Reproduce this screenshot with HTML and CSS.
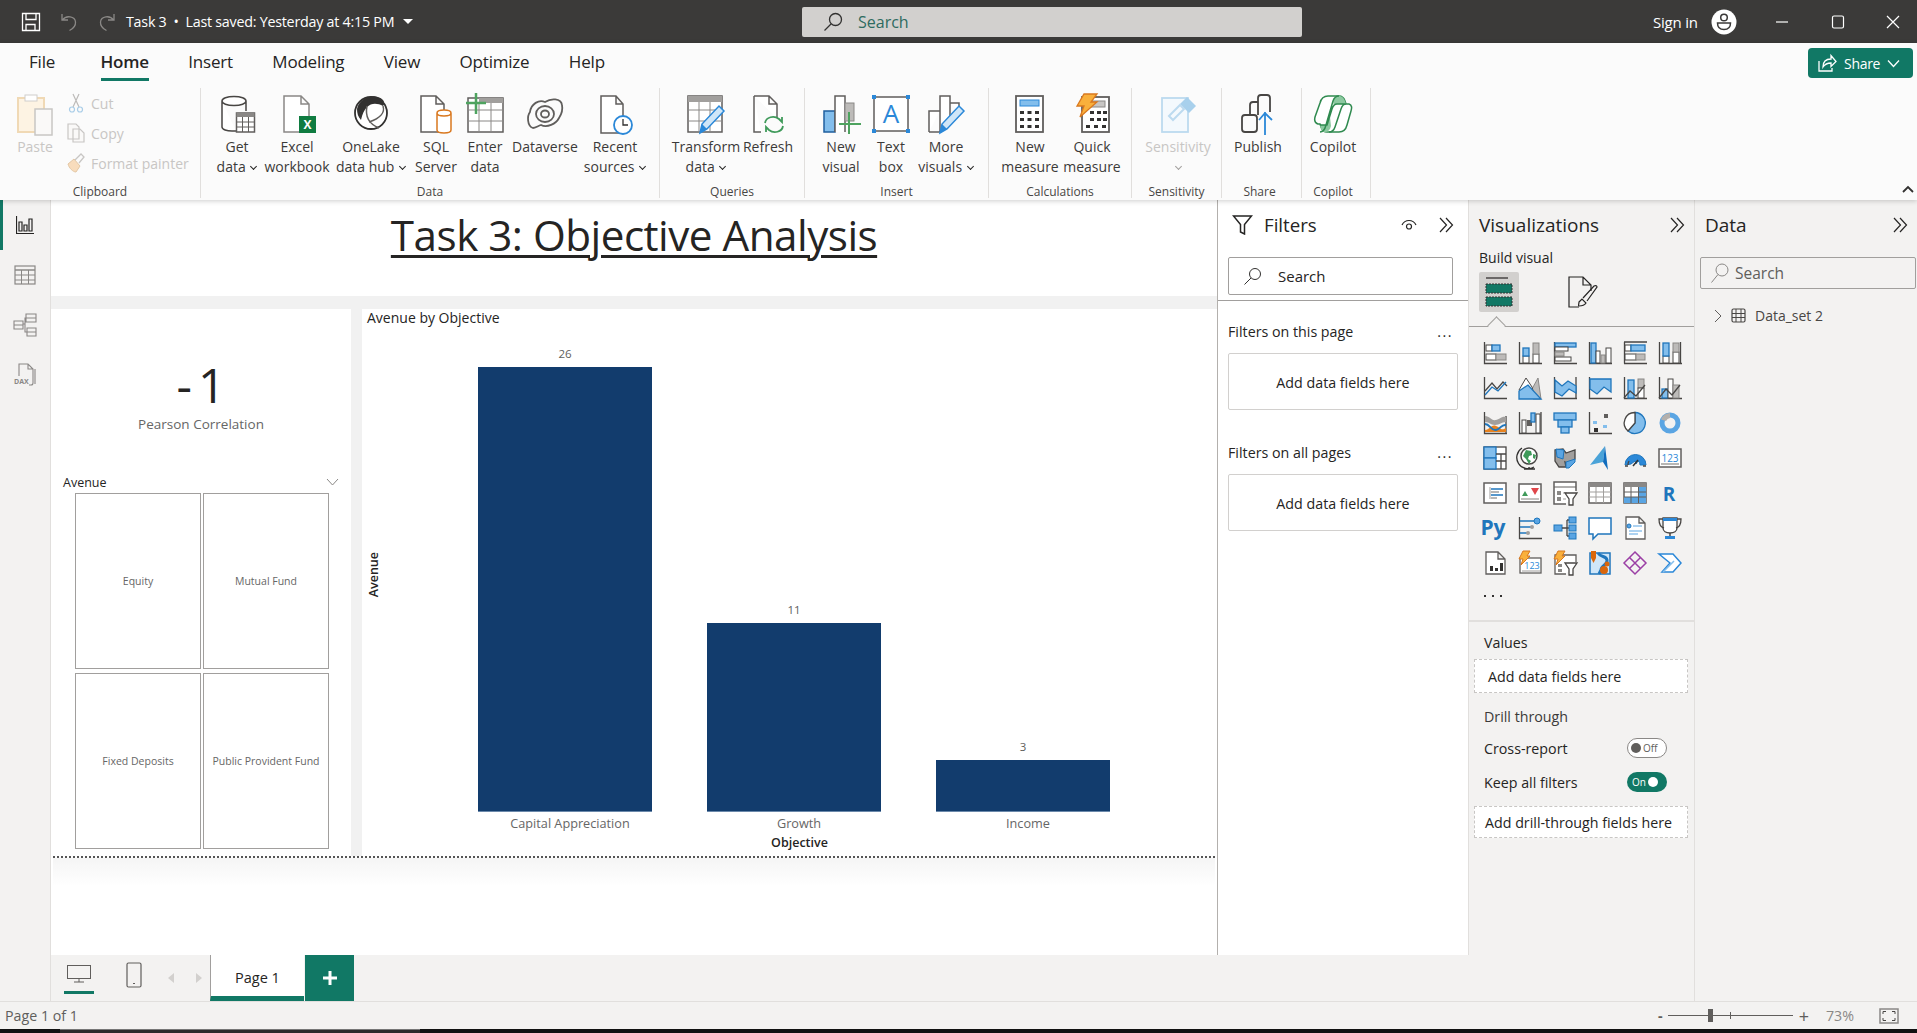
FILE: index.html
```
<!DOCTYPE html>
<html>
<head>
	<meta charset="utf-8">
	<title>Task 3</title>
	<link rel="stylesheet" href="styles.css">
</head>
<body>
<div class="app">

	<!-- title bar -->
	<header class="titlebar">
		<div class="tb-left">
			<svg class="tb-save" width="20" height="20" viewBox="0 0 20 20"><path d="M1.500 1.500h17v17h-17zM5 1.500v6h10v-6M5 18.500v-6h9v6" fill="none" stroke="#fff" stroke-width="1.300"/></svg>
			<svg class="tb-undo" width="18" height="20" viewBox="0 0 18 20"><path d="M2 2v6h6M2.500 8C6 3 15 4 15.500 10c.3 4-3 7-6 8.500" fill="none" stroke="#8a8886" stroke-width="1.300"/></svg>
			<svg class="tb-redo" width="18" height="20" viewBox="0 0 18 20"><path d="M16 2v6h-6M15.500 8C12 3 3 4 2.500 10c-.3 4 3 7 6 8.500" fill="none" stroke="#8a8886" stroke-width="1.300"/></svg>
			<span class="tb-file">Task 3 &nbsp;•&nbsp; Last saved: Yesterday at 4:15 PM</span>
			<span class="tb-caret"></span>
		</div>
		<div class="tb-search">
			<svg width="20" height="20" viewBox="0 0 20 20"><circle cx="12.500" cy="7.500" r="6" fill="none" stroke="#323130" stroke-width="1.300"/><path d="M8 12l-6.500 6.500" stroke="#323130" stroke-width="1.300"/></svg>
			<span>Search</span>
		</div>
		<div class="tb-right">
			<span class="tb-signin">Sign in</span>
			<svg class="tb-avatar" width="26" height="26" viewBox="0 0 26 26"><circle cx="13" cy="13" r="12.500" fill="#fff"/><circle cx="13" cy="8.500" r="3.300" fill="none" stroke="#3b3a39" stroke-width="1.500"/><path d="M6.500 14h13c0 4-2.500 6.500-6.500 6.500s-6.500-2.500-6.500-6.500z" fill="none" stroke="#3b3a39" stroke-width="1.500"/></svg>
			<svg class="tb-min" width="14" height="14" viewBox="0 0 14 14"><path d="M1 7h12" stroke="#fff" stroke-width="1.200"/></svg>
			<svg class="tb-max" width="14" height="14" viewBox="0 0 14 14"><rect x="1.500" y="1" width="11" height="12" rx="1.500" fill="none" stroke="#fff" stroke-width="1.200"/></svg>
			<svg class="tb-close" width="14" height="14" viewBox="0 0 14 14"><path d="M1 1l12 12M13 1L1 13" stroke="#fff" stroke-width="1.200"/></svg>
		</div>
	</header>

	<!-- ribbon -->
	<section class="ribbon">
		<nav class="tabs">
			<span class="tab tab-file">File</span>
			<span class="tab tab-on">Home</span>
			<span class="tab">Insert</span>
			<span class="tab">Modeling</span>
			<span class="tab">View</span>
			<span class="tab">Optimize</span>
			<span class="tab">Help</span>
			<button class="share">
				<svg width="20" height="20" viewBox="0 0 20 20"><path d="M2 8v10h13v-3M6 14c0-5 3-8 8-8V2.500l5 6-5 5V10c-3 0-6 1-8 4z" fill="none" stroke="#fff" stroke-width="1.300"/></svg>
				Share
				<svg width="13" height="9" viewBox="0 0 13 9"><path d="M1 1.500l5.500 6 5.500-6" fill="none" stroke="#fff" stroke-width="1.300"/></svg>
			</button>
		</nav>
		<div class="groups">

			<div class="group g-clip">
				<div class="g-body clip-body">
					<div class="rbtn off paste">
						<svg class="ricon" width="40" height="44" viewBox="0 0 40 44"><rect x="3" y="6" width="26" height="34" fill="#fdf3e3" stroke="#f0d9b5" stroke-width="2"/><rect x="10" y="3" width="12" height="6" fill="#fff" stroke="#d0cecc"/><rect x="20" y="17" width="17" height="26" fill="#faf9f8" stroke="#c8c6c4" stroke-width="1.500"/></svg>
						<span>Paste</span>
					</div>
					<div class="clip-small">
						<div class="sbtn off"><svg width="18" height="20" viewBox="0 0 18 20"><path d="M6 1l6 13M12 1L6 14" stroke="#bdbbb9" stroke-width="1.200"/><circle cx="5" cy="16.500" r="2.500" fill="none" stroke="#a9cde8" stroke-width="1.200"/><circle cx="13" cy="16.500" r="2.500" fill="none" stroke="#a9cde8" stroke-width="1.200"/></svg><span>Cut</span></div>
						<div class="sbtn off"><svg width="18" height="20" viewBox="0 0 18 20"><path d="M1 1h8l3 3v12H1z M6 6h7l4 4v9H6z" fill="#faf9f8" stroke="#c8c6c4" stroke-width="1.200"/></svg><span>Copy</span></div>
						<div class="sbtn off"><svg width="18" height="20" viewBox="0 0 18 20"><path d="M1 11l6-5 6 7-4 6c-3 0-7-4-8-8z" fill="#f8dcbc" stroke="#e3c7a4"/><path d="M8 7l6-6 3 3-5 6" fill="none" stroke="#c8c6c4" stroke-width="1.300"/></svg><span>Format painter</span></div>
					</div>
				</div>
				<div class="g-label">Clipboard</div>
			</div>

			<div class="group g-data">
				<div class="g-body data-body">
					<div class="rbtn">
						<svg class="ricon" width="40" height="44" viewBox="0 0 40 44"><path d="M5 9v26c0 2.500 5 4 10 4h4M29 9v10M5 9c0-2.500 5-4.500 12-4.500S29 6.500 29 9s-5 4.500-12 4.500S5 11.500 5 9z" fill="#fff" stroke="#484644" stroke-width="1.500"/><rect x="19.500" y="21" width="18" height="19" fill="#fff" stroke="#605e5c" stroke-width="1.500"/><rect x="19.500" y="21" width="18" height="4" fill="#8a8886"/><path d="M19.500 30h18M19.500 35h18M25.500 25v15M31.500 25v15" stroke="#605e5c"/></svg>
						<span>Get</span><span>data <i class="chev"></i></span>
					</div>
					<div class="rbtn">
						<svg class="ricon" width="40" height="44" viewBox="0 0 40 44"><path d="M7 4h17l8 8v28H7z M24 4v8h8" fill="#fff" stroke="#8a8886" stroke-width="1.500"/><rect x="22" y="24" width="17" height="17" fill="#107c41"/><text x="30.500" y="37" class="xl">X</text></svg>
						<span>Excel</span><span>workbook</span>
					</div>
					<div class="rbtn">
						<svg class="ricon" width="40" height="44" viewBox="0 0 40 44"><circle cx="20" cy="21" r="16" fill="#fff" stroke="#323130" stroke-width="1.800"/><path d="M6 17C8 6 24 0 32 8c2 3 1 5 0 6C24 10 14 10 10 28 7 25 6 21 6 17z" fill="#323130"/><path d="M16 14c-2 10 2 18 12 22M32 14c2 6-2 12-14 16" fill="none" stroke="#605e5c" stroke-width="1.500"/></svg>
						<span>OneLake</span><span>data hub <i class="chev"></i></span>
					</div>
					<div class="rbtn">
						<svg class="ricon" width="40" height="44" viewBox="0 0 40 44"><path d="M5 4h15l8 8v28H5z M20 4v8h8" fill="#fff" stroke="#605e5c" stroke-width="1.500"/><path d="M21 21v17c0 2 3 3 7 3s7-1 7-3V21c0-2-3-3-7-3s-7 1-7 3zc0 2 3 3 7 3s7-1 7-3" fill="#fff" stroke="#d9781f" stroke-width="1.500"/></svg>
						<span>SQL</span><span>Server</span>
					</div>
					<div class="rbtn">
						<svg class="ricon" width="40" height="44" viewBox="0 0 40 44"><rect x="3" y="6" width="35" height="34" fill="#fff" stroke="#605e5c" stroke-width="1.500"/><rect x="14" y="6" width="24" height="5" fill="#a19f9d"/><path d="M3 18h35M3 29h35M14 11v29M26 11v29" stroke="#8a8886"/><path d="M11 1v21M1 11h20" stroke="#4ea35f" stroke-width="2.500"/></svg>
						<span>Enter</span><span>data</span>
					</div>
					<div class="rbtn">
						<svg class="ricon" width="40" height="44" viewBox="0 0 40 44"><path d="M8 36C2 34 2 24 5 20 6 12 14 7 20 10c6-4 16-4 17 3 1 5-1 10-3 13-3 6-12 10-18 7-3 1-6 3-8 3z" fill="none" stroke="#605e5c" stroke-width="1.800"/><ellipse cx="20" cy="22" rx="9" ry="8" fill="none" stroke="#605e5c" stroke-width="1.800"/><ellipse cx="20" cy="22" rx="4" ry="3.500" fill="none" stroke="#605e5c" stroke-width="1.800"/></svg>
						<span>Dataverse</span>
					</div>
					<div class="rbtn">
						<svg class="ricon" width="40" height="44" viewBox="0 0 40 44"><path d="M6 4h15l7 8v29H6z M21 4v8h7" fill="#fff" stroke="#605e5c" stroke-width="1.500"/><circle cx="28" cy="33" r="9" fill="#fff" stroke="#2b88d8" stroke-width="1.800"/><path d="M28 27v6h5" fill="none" stroke="#323130" stroke-width="1.300"/></svg>
						<span>Recent</span><span>sources <i class="chev"></i></span>
					</div>
				</div>
				<div class="g-label">Data</div>
			</div>

			<div class="group g-queries">
				<div class="g-body queries-body">
					<div class="rbtn">
						<svg class="ricon" width="40" height="44" viewBox="0 0 40 44"><rect x="2" y="4" width="34" height="36" fill="#fff" stroke="#605e5c" stroke-width="1.500"/><rect x="2" y="4" width="34" height="6" fill="#a19f9d"/><path d="M2 18h34M2 29h34M13 10v30M24 10v30" stroke="#8a8886"/><path d="M14 41l2-9 17-18 5 5-17 18z" fill="#cfe6f8" stroke="#2b88d8" stroke-width="1.500"/><path d="M14 41l2-9 5 5z" fill="#2b88d8"/></svg>
						<span>Transform</span><span>data <i class="chev"></i></span>
					</div>
					<div class="rbtn">
						<svg class="ricon" width="40" height="44" viewBox="0 0 40 44"><path d="M6 4h15l8 8v14M13 40H6V4 M21 4v8h8" fill="#fff" stroke="#605e5c" stroke-width="1.500"/><path d="M17 31c1-6 9-8 14-4l3 3v-5M35 34c-1 6-9 8-14 4l-3-3v5" fill="none" stroke="#3f9a5a" stroke-width="1.800"/></svg>
						<span>Refresh</span>
					</div>
				</div>
				<div class="g-label">Queries</div>
			</div>

			<div class="group g-insert">
				<div class="g-body insert-body">
					<div class="rbtn">
						<svg class="ricon" width="40" height="44" viewBox="0 0 40 44"><rect x="3" y="19" width="11" height="21" fill="#83beec" stroke="#1f5f9e" stroke-width="1.500"/><path d="M14 40V4h10v36" fill="#fff" stroke="#605e5c" stroke-width="1.500"/><rect x="24" y="11" width="9" height="18" fill="#bdbbb9" stroke="#8a8886"/><path d="M28 20v22M18 32h22" stroke="#4ea35f" stroke-width="2"/></svg>
						<span>New</span><span>visual</span>
					</div>
					<div class="rbtn">
						<svg class="ricon" width="40" height="44" viewBox="0 0 40 44"><rect x="3" y="5" width="34" height="34" fill="#fff" stroke="#605e5c" stroke-width="1.500"/><rect x="1" y="3" width="4" height="4" fill="#2b88d8"/><rect x="35" y="3" width="4" height="4" fill="#2b88d8"/><rect x="1" y="37" width="4" height="4" fill="#2b88d8"/><rect x="35" y="37" width="4" height="4" fill="#2b88d8"/><text x="20" y="31" class="txt-a">A</text></svg>
						<span>Text</span><span>box</span>
					</div>
					<div class="rbtn">
						<svg class="ricon" width="40" height="44" viewBox="0 0 40 44"><path d="M3 40V19h11M14 40V4h10v20M24 11h9v8M3 40h11" fill="#fff" stroke="#605e5c" stroke-width="1.500"/><path d="M14 41l2-9 17-18 5 5-17 18z" fill="#cfe6f8" stroke="#2b88d8" stroke-width="1.500"/><path d="M14 41l2-9 5 5z" fill="#2b88d8"/></svg>
						<span>More</span><span>visuals <i class="chev"></i></span>
					</div>
				</div>
				<div class="g-label">Insert</div>
			</div>

			<div class="group g-calc">
				<div class="g-body calc-body">
					<div class="rbtn">
						<svg class="ricon" width="40" height="44" viewBox="0 0 40 44"><rect x="6" y="4" width="27" height="36" fill="#fff" stroke="#605e5c" stroke-width="1.800"/><rect x="10" y="8" width="19" height="6" fill="#83beec" stroke="#2b88d8"/><path d="M10 19h4v3h-4zM17.500 19h4v3h-4zM25 19h4v3h-4zM10 26h4v3h-4zM17.500 26h4v3h-4zM25 26h4v3h-4zM10 33h4v3h-4zM17.500 33h4v3h-4zM25 33h4v3h-4z" fill="#323130"/></svg>
						<span>New</span><span>measure</span>
					</div>
					<div class="rbtn">
						<svg class="ricon" width="40" height="44" viewBox="0 0 40 44"><rect x="10" y="5" width="27" height="35" fill="#fff" stroke="#605e5c" stroke-width="1.800"/><rect x="18" y="9" width="15" height="6" fill="#c8c6c4" stroke="#8a8886"/><path d="M18 19h4v3h-4zM25 19h4v3h-4zM31 19h4v3h-4zM18 26h4v3h-4zM25 26h4v3h-4zM31 26h4v3h-4zM14 33h4v3h-4zM22 33h4v3h-4zM30 33h4v3h-4z" fill="#323130"/><path d="M12 2h13l-6 8h6L8 25l4-11H5z" fill="#f9b03c" stroke="#d9781f" stroke-width="1.300"/></svg>
						<span>Quick</span><span>measure</span>
					</div>
				</div>
				<div class="g-label">Calculations</div>
			</div>

			<div class="group g-sens">
				<div class="g-body sens-body">
					<div class="rbtn off">
						<svg class="ricon" width="40" height="44" viewBox="0 0 40 44"><rect x="4" y="6" width="26" height="34" fill="#f4f9fd" stroke="#bcdaef" stroke-width="1.800"/><path d="M22 12l7-7 9 9-7 7z" fill="#a8d0ec"/><path d="M11 24l11-11 4 4-11 11z" fill="none" stroke="#bcdaef" stroke-width="2"/></svg>
						<span>Sensitivity</span><span><i class="chev chev-off"></i></span>
					</div>
				</div>
				<div class="g-label">Sensitivity</div>
			</div>

			<div class="group g-share">
				<div class="g-body share-body">
					<div class="rbtn">
						<svg class="ricon" width="40" height="44" viewBox="0 0 40 44"><rect x="4" y="23" width="15" height="17" rx="3" fill="none" stroke="#484644" stroke-width="1.800"/><path d="M12 23V13c0-2 1-3 3-3h5M20 23V6c0-2 1-3 3-3h6c2 0 3 1 3 3v14" fill="none" stroke="#484644" stroke-width="1.800"/><path d="M27 43V20M21 28l6-7 7 7" fill="none" stroke="#2b88d8" stroke-width="1.800"/></svg>
						<span>Publish</span>
					</div>
				</div>
				<div class="g-label">Share</div>
			</div>

			<div class="group g-copilot">
				<div class="g-body copilot-body">
					<div class="rbtn">
						<svg class="ricon" width="40" height="44" viewBox="0 0 40 44"><path d="M15 4h11c3 0 5 2 6 5l1 3h3c3 1 3 4 2 7l-4 14c-1 4-4 7-8 7H14c-3 0-5-2-6-5l-1-3H5c-3-1-4-3-3-7L7 11c1-4 4-7 8-7z" fill="#fff" stroke="#2f8a4f" stroke-width="1.500"/><path d="M26 4c3 0 5 2 6 5l1 3H24c-2 0-3 1-3 3l-1-6c1-3 3-5 6-5zM7 33H14l3-8 1 9c-1 4-3 6-6 6-3 0-4-2-5-7z" fill="#8cc9a0"/><path d="M26 4c-3 0-5 2-6 5L13 33c-1 4-3 7-6 7M33 12H24c-3 0-4 2-5 5l-5 16H7M33 12c-2 0-4 2-5 5l-6 18c-1 3-3 5-6 5" fill="none" stroke="#2f8a4f" stroke-width="1.500"/></svg>
						<span>Copilot</span>
					</div>
				</div>
				<div class="g-label">Copilot</div>
			</div>

			<svg class="collapse" width="12" height="8" viewBox="0 0 12 8"><path d="M1 7l5-5 5 5" fill="none" stroke="#323130" stroke-width="1.800"/></svg>
		</div>
	</section>

	<!-- main area -->
	<main class="main">
		<aside class="rail">
			<div class="rail-btn rail-on"><svg width="18" height="18" viewBox="0 0 18 18"><path d="M.5 0v17.500H18" fill="none" stroke="#252423" stroke-width="1.200"/><path d="M3 6h3v9H3zM8 9h3v6H8zM13 3h3v12h-3z" fill="none" stroke="#252423" stroke-width="1.200"/></svg></div>
			<div class="rail-btn"><svg width="22" height="20" viewBox="0 0 22 20"><rect x="1" y="1" width="20" height="18" fill="none" stroke="#8a8886" stroke-width="1.200"/><path d="M1 5h20" stroke="#8a8886" stroke-width="1.500"/><path d="M1 10h20M1 15h20M7.500 5v14M14.500 5v14" stroke="#8a8886"/></svg></div>
			<div class="rail-btn"><svg width="24" height="24" viewBox="0 0 24 24"><path d="M1 8h9v8H1zM1 12h9M13 1h10v8H13zM13 5h10M14 15h9v8h-9zM14 19h9M10 11h2V5h1M12 11v8h2" fill="none" stroke="#8a8886" stroke-width="1.100"/></svg></div>
			<div class="rail-btn"><svg width="24" height="24" viewBox="0 0 24 24"><path d="M6 13V1h9l5 5v14c0 1-1 2-2 2h-2M15 1v5h5M22 6v15" fill="none" stroke="#8a8886" stroke-width="1.100"/><text x="1" y="21" class="dax">DAX</text></svg></div>
		</aside>

		<div class="center">
			<div class="workspace">
				<div class="canvas">
					<h1 class="report-title"><u>Task 3: Objective Analysis</u></h1>
					<div class="report-row">
						<div class="side-card">
							<div class="kpi">
								<div class="kpi-value">-1</div>
								<div class="kpi-label">Pearson Correlation</div>
							</div>
							<div class="slicer-head">
								<span>Avenue</span>
								<svg width="13" height="8" viewBox="0 0 13 8"><path d="M1 1l5.500 6L12 1" fill="none" stroke="#8a8886"/></svg>
							</div>
							<div class="slicer-tiles">
								<div class="tile">Equity</div>
								<div class="tile">Mutual Fund</div>
								<div class="tile">Fixed Deposits</div>
								<div class="tile">Public Provident Fund</div>
							</div>
						</div>
						<div class="chart">
							<div class="chart-title">Avenue by Objective</div>
							<div class="chart-body">
								<div class="y-axis"><span>Avenue</span></div>
								<div class="plot-wrap">
									<div class="plot">
										<div class="col"><div class="val">26</div><div class="bar bar-a"></div></div>
										<div class="col"><div class="val">11</div><div class="bar bar-b"></div></div>
										<div class="col"><div class="val">3</div><div class="bar bar-c"></div></div>
									</div>
									<div class="cats">
										<span>Capital Appreciation</span>
										<span>Growth</span>
										<span>Income</span>
									</div>
									<div class="x-title">Objective</div>
								</div>
							</div>
						</div>
					</div>
					<div class="page-end"></div>
				</div>

				<aside class="filters">
					<div class="f-head">
						<svg width="21" height="21" viewBox="0 0 21 21"><path d="M1.500 2h18l-7 8.500V20l-4-2v-7.500z" fill="none" stroke="#252423" stroke-width="1.500"/></svg>
						<span class="f-title">Filters</span>
						<svg class="f-eye" width="16" height="14" viewBox="0 0 16 14"><path d="M1 7c3-6 11-6 14 0" fill="none" stroke="#252423" stroke-width="1.200"/><circle cx="8" cy="8.500" r="2.500" fill="none" stroke="#252423" stroke-width="1.200"/></svg>
						<svg class="dbl" width="15" height="16" viewBox="0 0 15 16"><path d="M1 1l6.500 7L1 15M7 1l6.500 7L7 15" fill="none" stroke="#252423" stroke-width="1.200"/></svg>
					</div>
					<div class="f-search">
						<svg width="19" height="19" viewBox="0 0 19 19"><circle cx="12" cy="7" r="5.500" fill="none" stroke="#323130"/><path d="M8 11l-6.500 6.500" stroke="#323130"/></svg>
						<span>Search</span>
					</div>
					<div class="f-rule"></div>
					<div class="f-sec">
						<div class="f-sec-head"><span>Filters on this page</span><span class="dots">...</span></div>
						<div class="f-box">Add data fields here</div>
					</div>
					<div class="f-sec">
						<div class="f-sec-head"><span>Filters on all pages</span><span class="dots">...</span></div>
						<div class="f-box">Add data fields here</div>
					</div>
				</aside>
			</div>

			<div class="pagebar">
				<div class="view-btn view-on"><svg width="24" height="18" viewBox="0 0 24 18"><rect x=".5" y=".5" width="23" height="13" fill="none" stroke="#605e5c"/><path d="M12 14v3M7 17h10" stroke="#605e5c"/></svg></div>
				<div class="view-phone"><svg width="16" height="26" viewBox="0 0 16 26"><rect x="1" y="1" width="14" height="24" rx="1.500" fill="none" stroke="#605e5c" stroke-width="1.200"/><path d="M7 21.500h2" stroke="#605e5c" stroke-width="1.200"/></svg></div>
				<div class="arrows">
					<i class="arr arr-l"></i>
					<i class="arr arr-r"></i>
				</div>
				<div class="page-tab">Page 1</div>
				<div class="page-add"><svg width="14" height="14" viewBox="0 0 14 14"><path d="M7 0v14M0 7h14" stroke="#fff" stroke-width="3"/></svg></div>
			</div>
		</div>

		<aside class="viz">
			<div class="p-head"><span>Visualizations</span>
				<svg class="dbl" width="15" height="16" viewBox="0 0 15 16"><path d="M1 1l6.500 7L1 15M7 1l6.500 7L7 15" fill="none" stroke="#252423" stroke-width="1.200"/></svg>
			</div>
			<div class="build-label">Build visual</div>
			<div class="build-icons">
				<div class="build-on">
					<svg width="30" height="32" viewBox="0 0 30 32"><path d="M2 2h22" stroke="#484644" stroke-width="1.500"/><rect x="2" y="8" width="26" height="9" fill="#117865" stroke="#333" stroke-dasharray="2 1"/><rect x="2" y="21" width="26" height="9" fill="#117865" stroke="#333" stroke-dasharray="2 1"/></svg>
				</div>
				<svg class="build-fmt" width="32" height="32" viewBox="0 0 32 32"><path d="M12 31H2V1h14l8 8v6M16 1v8h8" fill="none" stroke="#252423" stroke-width="1.200"/><path d="M12 26l3-3 4 4c-2 3-6 3-7 3-1 0 0-2 0-4zM16 22L27 10c2-1 3 0 3 1L20 25" fill="none" stroke="#252423" stroke-width="1.200"/></svg>
			</div>
			<div class="tab-rule"><i></i></div>

			<div class="viz-grid">
				<!-- row 1 -->
				<svg viewBox="0 0 24 24"><path class="ax" d="M1.500 1v21.500H24"/><rect class="wh" x="3" y="4" width="6" height="6"/><rect class="bl" x="9" y="4" width="8" height="6"/><rect class="wh" x="3" y="13" width="10" height="6"/><rect class="gr" x="13" y="13" width="10" height="6"/></svg>
				<svg viewBox="0 0 24 24"><path class="ax" d="M1.500 1v21.500H24"/><rect class="wh" x="5" y="15" width="6" height="7"/><rect class="bl" x="5" y="7" width="6" height="8"/><rect class="wh" x="15" y="13" width="6" height="9"/><rect class="gr" x="15" y="2" width="6" height="11"/></svg>
				<svg viewBox="0 0 24 24"><path class="ax" d="M1.500 1v21.500H24"/><rect class="bl" x="2" y="2" width="21" height="4"/><rect class="wh" x="2" y="6" width="13" height="4"/><rect class="gr" x="2" y="11" width="9" height="4"/><rect class="wh" x="2" y="16" width="16" height="4"/></svg>
				<svg viewBox="0 0 24 24"><path class="ax" d="M1.500 1v21.500H24"/><rect class="bl" x="3" y="2" width="5" height="20"/><rect class="wh" x="8" y="10" width="4" height="12"/><rect class="gr" x="13" y="14" width="4" height="8"/><rect class="wh" x="18" y="7" width="5" height="15"/></svg>
				<svg viewBox="0 0 24 24"><path class="ax" d="M1.500 1v21.500M1 1h23M1 22.500h23"/><rect class="wh" x="2" y="4" width="6" height="6"/><rect class="bl" x="8" y="4" width="14" height="6"/><rect class="wh" x="2" y="13" width="11" height="6"/><rect class="gr" x="13" y="13" width="9" height="6"/></svg>
				<svg viewBox="0 0 24 24"><path class="ax" d="M1.500 1v21.500H24M22.500 1v21"/><rect class="wh" x="5" y="15" width="6" height="7"/><rect class="bl" x="5" y="2" width="6" height="13"/><rect class="wh" x="15" y="11" width="6" height="11"/><rect class="gr" x="15" y="2" width="6" height="9"/></svg>
				<!-- row 2 -->
				<svg viewBox="0 0 24 24"><path class="ax" d="M1.500 1v21.500H24"/><path class="ax" d="M2 15l7-8 5 6 6-7 4 4"/><path class="ln" d="M2 19l7-8 6 4 8-9"/></svg>
				<svg viewBox="0 0 24 24"><path class="gr" d="M14 13l6-11 3 21h-8z"/><path class="wh" d="M1 14L8 2l6 9 3 11z"/><path class="bl" d="M1 23v-8l9-6 13 14z"/></svg>
				<svg viewBox="0 0 24 24"><path class="ax" d="M1.500 1v21.500H24M23 1v21"/><path class="bl" d="M2 4l7 6 6-5 8 5v7l-7-4-7 7-7-4z"/></svg>
				<svg viewBox="0 0 24 24"><path class="ax" d="M1.500 1v21.500H24"/><path class="bl" d="M2 3h21v13l-7-5-7 7-7-5z"/></svg>
				<svg viewBox="0 0 24 24"><path class="ax" d="M1.500 1v21.500H24"/><rect class="bl" x="5" y="4" width="6" height="18"/><rect class="gr" x="15" y="3" width="6" height="9"/><rect class="wh" x="15" y="12" width="6" height="10"/><path class="ax" d="M1 22l6-7 6 5 9-11"/></svg>
				<svg viewBox="0 0 24 24"><path class="ax" d="M1.500 1v21.500H24"/><rect class="bl" x="4" y="13" width="6" height="9"/><rect class="wh" x="10" y="3" width="5" height="19"/><rect class="gr" x="15" y="9" width="6" height="13"/><path class="ax" d="M1 22l7-9 6 6 8-10"/></svg>
				<!-- row 3 -->
				<svg viewBox="0 0 24 24"><path class="ax" d="M1.500 1v21.500H24M23 5v17"/><path d="M2 5c5 0 6 5 11 4s5-4 10-3v5c-5 0-6 3-11 3S7 11 2 11z" fill="#a19f9d"/><path d="M2 19c5 0 6-6 11-4s5 5 10 2v4H2z" fill="#e8821e"/><path d="M2 13c5 0 6 7 11 6s5-6 10-5" fill="none" stroke="#1f76bc" stroke-width="2"/></svg>
				<svg viewBox="0 0 24 24"><path class="ax" d="M1.500 1v21.500H24M23 1v21"/><rect class="wh" x="4" y="9" width="4" height="13"/><rect x="9" y="9" width="5" height="6" fill="#605e5c"/><rect class="bl" x="13" y="2" width="4" height="9"/><rect class="wh" x="18" y="3" width="4" height="19"/></svg>
				<svg viewBox="0 0 24 24"><rect class="bl" x="1" y="2" width="22" height="7"/><rect class="bl" x="5" y="9" width="14" height="7"/><rect class="bl" x="8" y="16" width="8" height="6"/></svg>
				<svg viewBox="0 0 24 24"><path class="ax" d="M1.500 1v21.500H24"/><rect x="5" y="10" width="4" height="3" fill="#83beec"/><rect x="6" y="17" width="4" height="4" fill="#323130"/><rect x="16" y="3" width="4" height="4" fill="#605e5c"/><rect x="15" y="14" width="4" height="3" fill="#83beec"/></svg>
				<svg viewBox="0 0 24 24"><path d="M12 1.500A10.500 10.500 0 1 1 5 20l7-8z" fill="#83beec" stroke="#1f76bc" stroke-width="1.300"/><path d="M12 1.500A10.500 10.500 0 0 0 5 20l7-8z" fill="#fff" stroke="#484644" stroke-width="1.300"/></svg>
				<svg viewBox="0 0 24 24"><circle cx="12" cy="12" r="8" fill="none" stroke="#5aa5e3" stroke-width="5"/><path d="M3 8.500A10 10 0 0 1 12 2v5a5 5 0 0 0-4 3z" fill="#b3b0ad"/></svg>
				<!-- row 4 -->
				<svg viewBox="0 0 24 24"><rect x="1" y="1" width="22" height="22" fill="#fff" stroke="#484644" stroke-width="1.300"/><rect x="1" y="1" width="12" height="11" fill="#83beec" stroke="#1f76bc" stroke-width="1.300"/><rect x="1" y="12" width="12" height="11" fill="#83beec" stroke="#1f76bc" stroke-width="1.300"/><path d="M13 8h10M18 8v15M13 15h10" stroke="#484644" stroke-width="1.300"/></svg>
				<svg viewBox="0 0 24 24"><circle cx="11" cy="10" r="8" fill="#fff" stroke="#484644" stroke-width="1.500"/><path d="M8 4l5 1 1 4-3 1-1 3 3 2-2 3-3-5-3-3z" fill="#3f9a5a"/><path d="M15 8l3 1-1 4-2-1z" fill="#3f9a5a"/><path d="M4 2a11 11 0 0 0 12 19M11 21v2M6 23h11" fill="none" stroke="#323130" stroke-width="1.300"/></svg>
				<svg viewBox="0 0 24 24"><path d="M2 4l8-1 3 4 9-3v9l-6 5-4-2 1 5H6L2 15z" fill="#a19f9d" stroke="#484644" stroke-width="1.300"/><path d="M3 3l8 1-1 9-6-2z" fill="#5aa5e3" stroke="#1f76bc"/><path d="M13 16l9-3v3l-6 6h-3z" fill="#5aa5e3" stroke="#1f76bc"/></svg>
				<svg viewBox="0 0 24 24"><path d="M17 0L2 19l13-3z" fill="#4aa3d8"/><path d="M17 0l-2 16 5 8z" fill="#0f6cbd"/></svg>
				<svg viewBox="0 0 24 24"><path d="M2 19A10.500 10.500 0 0 1 23 19h-6a4 4 0 0 0-2-4l-2 3-1-3-4 3z" fill="#2b88d8" stroke="#1f76bc"/><path d="M2 20h3M20 20h3M5 19a8 8 0 0 1 1-4" stroke="#484644" fill="none" stroke-width="1.300"/><path d="M10 20l5-6" stroke="#323130" stroke-width="1.500"/></svg>
				<svg viewBox="0 0 24 24"><rect x="1" y="3" width="22" height="18" fill="#fff" stroke="#605e5c" stroke-width="1.500"/><path d="M3 18h18" stroke="#a19f9d" stroke-width="1.500"/><text x="12" y="15.500" class="num">123</text></svg>
				<!-- row 5 -->
				<svg viewBox="0 0 24 24"><rect x="1" y="2" width="22" height="20" fill="#fff" stroke="#605e5c" stroke-width="1.500"/><path d="M7 6v12" stroke="#a19f9d"/><path d="M8 8h12M8 14h12" stroke="#1f76bc" stroke-width="1.500"/><path d="M8 11h8M8 17h6" stroke="#a19f9d" stroke-width="1.300"/></svg>
				<svg viewBox="0 0 24 24"><rect x="1" y="3" width="22" height="18" fill="#fff" stroke="#605e5c" stroke-width="1.500"/><path d="M4 15l3-5 3 5z" fill="#3f9a5a"/><path d="M13 7h8l-4 7z" fill="#e0464a"/><path d="M3 18h18" stroke="#a19f9d" stroke-width="1.300"/></svg>
				<svg viewBox="0 0 24 24"><path d="M13 23H1V1h22v9" fill="#fff" stroke="#605e5c" stroke-width="1.500"/><path d="M1 6h22" stroke="#605e5c"/><rect x="4" y="10" width="4" height="4" fill="#8a8886"/><rect x="4" y="16" width="4" height="4" fill="#8a8886"/><path d="M10 12h4M10 18h3" stroke="#a19f9d"/><path d="M12 12h12l-4 6v6h-4v-6z" fill="#fff" stroke="#484644" stroke-width="1.300"/></svg>
				<svg viewBox="0 0 24 24"><rect x="1" y="2" width="22" height="20" fill="#fff" stroke="#605e5c" stroke-width="1.500"/><rect x="1" y="2" width="22" height="4" fill="#8a8886"/><path d="M1 11h22M1 16h22M8 6v16M15.500 6v16" stroke="#a19f9d"/></svg>
				<svg viewBox="0 0 24 24"><rect x="1" y="2" width="22" height="20" fill="#fff" stroke="#605e5c" stroke-width="1.500"/><rect x="1" y="2" width="22" height="4" fill="#8a8886"/><path d="M16 6h7v16h-7zM1 16h15v6H1z" fill="#5aa5e3"/><path d="M1 11h22M1 16h22M8 6v16M15.500 6v16" stroke="#605e5c"/></svg>
				<svg viewBox="0 0 24 24"><text x="11" y="19.500" class="lang lang-r">R</text></svg>
				<!-- row 6 -->
				<svg viewBox="0 0 24 24"><text x="10" y="19" class="lang lang-py">Py</text></svg>
				<svg viewBox="0 0 24 24"><path class="ax" d="M1.500 1v21.500H24"/><path d="M2 5h15M2 11h11M2 17h7" stroke="#1f76bc" stroke-width="1.300"/><circle cx="19" cy="5" r="3" fill="#5aa5e3" stroke="#1f76bc"/><circle cx="14" cy="11" r="2" fill="#a19f9d"/><circle cx="10" cy="17" r="2" fill="#a19f9d"/></svg>
				<svg viewBox="0 0 24 24"><rect x="1" y="9" width="8" height="6" fill="#5aa5e3" stroke="#1f76bc"/><path d="M9 12h5M14 4v16M14 4h2M14 12h2M14 20h2" stroke="#484644" fill="none" stroke-width="1.300"/><rect x="16" y="1" width="7" height="6" fill="#5aa5e3" stroke="#1f76bc"/><rect x="16" y="9" width="7" height="6" fill="#5aa5e3" stroke="#1f76bc"/><rect x="16" y="17" width="7" height="6" fill="#5aa5e3" stroke="#1f76bc"/></svg>
				<svg viewBox="0 0 24 24"><path d="M1 2h22v16H10l-5 5v-5H1z" fill="#fff" stroke="#1f76bc" stroke-width="1.500"/></svg>
				<svg viewBox="0 0 24 24"><path d="M3 1h13l6 6v16H3z M16 1v6h6" fill="#fff" stroke="#605e5c" stroke-width="1.300"/><circle cx="6" cy="10" r="2" fill="#5aa5e3" stroke="#1f76bc"/><path d="M10 10h9M6 15h13M6 18h9" stroke="#5aa5e3"/></svg>
				<svg viewBox="0 0 24 24"><path d="M5 2h14v10c0 3-3 5-7 5s-7-2-7-5z" fill="#fff" stroke="#484644" stroke-width="1.300"/><path d="M5 3H1c0 5 1 8 5 9M19 3h4c0 5-1 8-5 9" fill="none" stroke="#484644" stroke-width="1.300"/><rect x="5" y="2" width="14" height="3" fill="#2b88d8"/><path d="M12 17v3" stroke="#484644" stroke-width="1.500"/><rect x="7" y="20" width="10" height="3" fill="#2b88d8"/></svg>
				<!-- row 7 -->
				<svg viewBox="0 0 24 24"><path d="M3 1h12l7 7v15H3z M15 1v7h7" fill="#fff" stroke="#605e5c" stroke-width="1.300"/><path d="M7 15h3v5H7zM12 17h3v3h-3zM17 12h3v8h-3z" fill="#323130"/></svg>
				<svg viewBox="0 0 24 24"><rect x="2" y="7" width="21" height="15" fill="#fff" stroke="#605e5c" stroke-width="1.300"/><text x="14" y="18" class="num num-sm">123</text><path d="M4 20h18" stroke="#a19f9d"/><path d="M5 0h7L9 5h3L3 14l2-6H1z" fill="#f9b03c" stroke="#d9781f"/></svg>
				<svg viewBox="0 0 24 24"><path d="M13 23H2V4h21v7" fill="#fff" stroke="#605e5c" stroke-width="1.300"/><rect x="5" y="13" width="4" height="3" fill="#8a8886"/><rect x="5" y="18" width="4" height="3" fill="#8a8886"/><path d="M12 12h12l-4 6v6h-4v-6z" fill="#fff" stroke="#484644" stroke-width="1.300"/><path d="M5 0h7L9 5h3L3 14l2-6H1z" fill="#f9b03c" stroke="#d9781f"/></svg>
				<svg viewBox="0 0 24 24"><rect x="2" y="2" width="20" height="21" fill="#cfe6f8" stroke="#1f76bc" stroke-width="1.500"/><path d="M10 2c3 5 8 2 9 7s-6 5-6 10l-2 4" fill="none" stroke="#1f76bc" stroke-width="3"/><path d="M3 0h5v7l-2.500 5L3 7z" fill="#d9660b"/><circle cx="19" cy="13" r="2.500" fill="#d9660b"/><circle cx="16" cy="19" r="4" fill="#d9660b"/></svg>
				<svg viewBox="0 0 24 24"><path d="M12 1l11 11-11 11L1 12z" fill="none" stroke="#9b3fa5" stroke-width="1.500"/><path d="M6.500 6.500l11 11M17.500 6.500l-11 11" stroke="#9b3fa5" stroke-width="1.500"/></svg>
				<svg viewBox="0 0 24 24"><path d="M1 3h14l8 9-8 9H4l8-9z" fill="#fff" stroke="#2b88d8" stroke-width="1.500"/><path d="M9 17l7-7M5 21l11-11" stroke="#83beec" stroke-width="1.500"/></svg>
			</div>
			<div class="viz-more"><i></i><i></i><i></i></div>
			<div class="viz-rule"></div>

			<div class="well-label">Values</div>
			<div class="well">Add data fields here</div>
			<div class="drill-label">Drill through</div>
			<div class="tog-row"><span>Cross-report</span><span class="toggle tog-off"><i></i>Off</span></div>
			<div class="tog-row"><span>Keep all filters</span><span class="toggle tog-on">On<i></i></span></div>
			<div class="well well-drill">Add drill-through fields here</div>
		</aside>

		<aside class="data">
			<div class="p-head"><span>Data</span>
				<svg class="dbl" width="15" height="16" viewBox="0 0 15 16"><path d="M1 1l6.500 7L1 15M7 1l6.500 7L7 15" fill="none" stroke="#252423" stroke-width="1.200"/></svg>
			</div>
			<div class="d-search">
				<svg width="19" height="22" viewBox="0 0 19 22"><circle cx="12" cy="8" r="6" fill="none" stroke="#8a8886"/><path d="M8 12.500l-6.500 8" stroke="#8a8886"/></svg>
				<span>Search</span>
			</div>
			<div class="tree-row">
				<svg width="8" height="14" viewBox="0 0 8 14"><path d="M1 1l6 6-6 6" fill="none" stroke="#605e5c"/></svg>
				<svg width="15" height="15" viewBox="0 0 15 15"><rect x="1" y="1" width="13" height="13" rx="1.500" fill="none" stroke="#484644" stroke-width="1.200"/><path d="M1 5.500h13M1 9.500h13M5 1v13M10 1v13" stroke="#484644"/></svg>
				<span>Data_set 2</span>
			</div>
		</aside>
	</main>

	<footer class="status">
		<span class="st-page">Page 1 of 1</span>
		<div class="zoom">
			<span class="z-minus">-</span>
			<div class="z-track"><i class="z-thumb"></i><i class="z-tick"></i></div>
			<span class="z-plus">+</span>
			<span class="z-val">73%</span>
			<svg class="z-fit" width="20" height="16" viewBox="0 0 20 16"><rect x="1" y="1" width="18" height="14" fill="none" stroke="#8a8886" stroke-width="1.500"/><path d="M4 6V3.500h3M13 3.500h3V6M4 10v2.500h3M13 12.500h3V10" fill="none" stroke="#484644"/></svg>
		</div>
	</footer>
	<div class="strip"><div class="strip-bar"></div></div>
</div>
</body>
</html>
```

FILE: styles.css
```
*{
	box-sizing: border-box;
}
body{
	margin: 0;
	font-family: "Open Sans", "Noto Sans", sans-serif;
	color: #252423;
	background: #fff;
}
svg{
	display: block;
	flex: none;
}
i{
	display: block;
	font-style: normal;
}
.app{
	width: 1917px;
	height: 1033px;
	overflow: hidden;
	display: flex;
	flex-direction: column;
}

/* title bar */
.titlebar{
	height: 43px;
	flex: none;
	background: #3b3a39;
	display: flex;
	align-items: center;
	color: #fff;
}
.tb-left{
	width: 802px;
	display: flex;
	align-items: center;
}
.tb-save{ margin-left: 21px; }
.tb-undo{ margin-left: 19px; }
.tb-redo{ margin-left: 20px; }
.tb-file{
	margin-left: 10px;
	font-size: 14.300px;
	letter-spacing: -.25px;
	white-space: nowrap;
}
.tb-caret{
	margin-left: 9px;
	border: 5px solid transparent;
	border-top: 5px solid #fff;
	border-bottom: 0;
}
.tb-search{
	width: 500px;
	height: 30px;
	background: #d2d0ce;
	border-radius: 2px;
	display: flex;
	align-items: center;
	padding-left: 21px;
	color: #2e6b60;
	font-size: 16px;
	gap: 15px;
}
.tb-right{
	flex: 1;
	display: flex;
	align-items: center;
}
.tb-signin{
	margin-left: 351px;
	font-size: 15px;
	letter-spacing: -.2px;
	width: 58px;
}
.tb-min{ margin-left: 38px; }
.tb-max{ margin-left: 42px; }
.tb-close{ margin-left: 41px; }

/* ribbon */
.ribbon{
	height: 157px;
	flex: none;
	background: #fbfbfb;
	position: relative;
	z-index: 2;
	box-shadow: 0 1px 5px rgba(0,0,0,.2);
}
.tabs{
	height: 42px;
	display: flex;
	padding-left: 29px;
	gap: 39.400px;
	font-size: 17px;
	position: relative;
}
.tab{
	height: 38px;
	padding-top: 7px;
	color: #252423;
	white-space: nowrap;
	letter-spacing: -.2px;
}
.tab-file{ margin-right: 6px; }
.tab-on{
	font-weight: 600;
	border-bottom: 3px solid #117865;
}
.share{
	margin-left: auto;
	margin-right: 4px;
	margin-top: 5px;
	width: 105px;
	height: 30px;
	background: #117865;
	border: 0;
	border-radius: 4px;
	color: #fff;
	font: 14px "Open Sans", sans-serif;
	letter-spacing: -.3px;
	display: flex;
	align-items: center;
	padding-left: 9px;
	gap: 7px;
}
.groups{
	height: 115px;
	display: flex;
	position: relative;
}
.group{
	height: 110px;
	margin-top: 3px;
	border-right: 1px solid #e1dfdd;
	display: flex;
	flex-direction: column;
}
.g-clip{ width: 201px; }
.g-data{ width: 459px; }
.g-queries{ width: 145px; }
.g-insert{ width: 184px; }
.g-calc{ width: 143px; }
.g-sens{ width: 90px; }
.g-share{ width: 80px; }
.g-copilot{ width: 69px; }
.g-body{
	flex: none;
	height: 96px;
	display: grid;
	font-size: 14px;
	color: #3b3a39;
}
.data-body{
	padding-left: 9px;
	grid-template-columns: 54px 66px 82px 48px 50px 70px 70px;
}
.queries-body{
	padding-left: 11px;
	grid-template-columns: 70px 54px;
}
.insert-body{
	padding-left: 11px;
	grid-template-columns: 50px 50px 60px;
}
.calc-body{
	padding-left: 10px;
	grid-template-columns: 62px 62px;
}
.sens-body{
	padding-left: 11px;
	grid-template-columns: 70px;
}
.share-body{
	padding-left: 8px;
	grid-template-columns: 56px;
}
.copilot-body{
	padding-left: 3px;
	grid-template-columns: 56px;
}
.clip-body{
	padding-left: 15px;
	grid-template-columns: 40px 1fr;
}
.rbtn{
	display: flex;
	flex-direction: column;
	align-items: center;
	white-space: nowrap;
	line-height: 20px;
}
.ricon{
	margin-top: 4px;
	margin-bottom: 1px;
}
.rbtn.off,
.off{
	color: #c8c6c4;
}
.clip-small{
	padding: 0 0 0 12px;
}
.sbtn{
	display: flex;
	align-items: center;
	gap: 6px;
	height: 30px;
	white-space: nowrap;
	font-size: 14px;
}
.g-label{
	height: 16px;
	line-height: 16px;
	text-align: center;
	font-size: 12px;
	color: #484644;
}
.g-share .g-label{
	padding-right: 4px;
}
.g-copilot .g-label{
	padding-right: 6px;
}
.chev{
	display: inline-block;
	width: 5px;
	height: 5px;
	border: solid #252423;
	border-width: 0 1.300px 1.300px 0;
	transform: rotate(45deg);
	margin: 0 1px 3px 2px;
}
.chev-off{
	border-color: #a19f9d;
}
.xl{
	font: 700 12px "Open Sans", sans-serif;
	fill: #fff;
	text-anchor: middle;
}
.txt-a{
	font: 26px "Open Sans", sans-serif;
	fill: #2b88d8;
	text-anchor: middle;
}
.collapse{
	position: absolute;
	right: 3px;
	top: 100px;
}

/* main area */
.main{
	flex: 1;
	display: flex;
	min-height: 0;
	background: #f3f2f1;
}
.rail{
	width: 51px;
	flex: none;
	background: #f3f2f1;
	border-right: 1px solid #e1dfdd;
}
.rail-btn{
	height: 50px;
	display: flex;
	align-items: center;
	justify-content: center;
}
.rail-on{
	box-shadow: inset 3px 0 0 #117865;
}
.dax{
	font: 700 7px "Open Sans", sans-serif;
	fill: #8a8886;
}
.center{
	width: 1418px;
	flex: none;
	display: flex;
	flex-direction: column;
}
.workspace{
	height: 755px;
	display: flex;
}
.canvas{
	width: 1166px;
	background: #fff;
	display: flex;
	flex-direction: column;
}
.report-title{
	height: 96px;
	margin: 0;
	text-align: center;
	font-size: 42.200px;
	font-weight: 400;
	line-height: 70px;
	letter-spacing: -.5px;
	color: #252423;
}
.report-title u{
	text-decoration-thickness: 3px;
	text-underline-offset: 4px;
}
.report-row{
	height: 560px;
	background: #f1f1f1;
	padding-top: 13px;
	display: flex;
	gap: 11px;
}
.side-card{
	width: 300px;
	background: #fff;
}
.kpi{
	height: 164px;
	padding-top: 48px;
	text-align: center;
}
.kpi-value{
	font-size: 48px;
	line-height: 56px;
	font-weight: 400;
	letter-spacing: 6px;
	padding-left: 6px;
}
.kpi-label{
	font-size: 13.500px;
	color: #666;
	margin-top: 2px;
}
.slicer-head{
	height: 18px;
	margin-bottom: 2px;
	padding: 0 12px 0 12px;
	display: flex;
	align-items: center;
	justify-content: space-between;
	font-size: 12.500px;
}
.slicer-tiles{
	display: grid;
	grid-template-columns: 126px 126px;
	grid-auto-rows: 176px;
	gap: 4px 2px;
	padding-left: 24px;
}
.tile{
	border: 1.500px solid #a19f9d;
	display: flex;
	align-items: center;
	justify-content: center;
	font-size: 10.500px;
	color: #666;
}
.chart{
	flex: 1;
	background: #fff;
}
.chart-title{
	height: 20px;
	padding: 0 5px;
	font-size: 14px;
	font-weight: 500;
	line-height: 18px;
}
.chart-body{
	display: flex;
	height: 527px;
}
.y-axis{
	width: 116px;
	height: 492px;
	padding-left: 3px;
	display: flex;
	align-items: center;
}
.y-axis span{
	writing-mode: vertical-rl;
	transform: rotate(180deg);
	font-size: 12.500px;
	font-weight: 600;
}
.plot-wrap{
	width: 633px;
}
.plot{
	height: 483px;
	display: flex;
	align-items: flex-end;
	gap: 55px;
}
.col{
	width: 174px;
	text-align: center;
}
.val{
	font-size: 11.500px;
	color: #605e5c;
	line-height: 15px;
	margin-bottom: 6px;
}
.bar{
	background: #123c6d;
	border-bottom: 1px solid #6b89ab;
}
.bar-a{ height: 445px; }
.bar-b{ height: 189px; }
.bar-c{ height: 52px; }
.cats{
	display: flex;
	gap: 55px;
	margin-top: 2px;
	font-size: 12.700px;
	color: #666;
}
.cats span{
	width: 174px;
	text-align: center;
	padding-left: 10px;
	white-space: nowrap;
}
.x-title{
	width: 633px;
	padding-left: 10px;
	text-align: center;
	font-size: 12.500px;
	font-weight: 600;
	margin-top: 2px;
}
.page-end{
	border-top: 2px dotted #555;
	margin: 0 2px;
	height: 30px;
	background: linear-gradient(#f5f5f5, #fff);
}

/* filters pane */
.filters{
	width: 252px;
	background: #fff;
	border-left: 1px solid #b3b0ad;
	border-right: 1px solid #e1dfdd;
}
.f-head{
	height: 57px;
	display: flex;
	align-items: center;
	padding: 0 14px 8px 14px;
}
.f-title{
	margin-left: 11px;
	font-size: 18.700px;
	font-weight: 500;
}
.f-eye{
	margin-left: auto;
	margin-right: 22px;
}
.f-search{
	height: 38px;
	margin: 0 15px 0 10px;
	border: 1px solid #a19f9d;
	border-radius: 2px;
	display: flex;
	align-items: center;
	padding-left: 14px;
	gap: 16px;
	font-size: 15px;
}
.f-rule{
	border-top: 1px solid #a19f9d;
	margin-top: 5px;
}
.f-sec{
	padding: 21px 10px 0 10px;
	height: 121px;
}
.f-sec-head{
	display: flex;
	justify-content: space-between;
	font-size: 14.250px;
	height: 31px;
	line-height: 19px;
}
.dots{
	padding-right: 5px;
	letter-spacing: 1.500px;
}
.f-box{
	height: 57px;
	border: 1px solid #d2d0ce;
	border-radius: 2px;
	display: flex;
	align-items: center;
	justify-content: center;
	padding-top: 1px;
	font-size: 14.250px;
}

/* page tabs */
.pagebar{
	flex: 1;
	display: flex;
	background: #f3f2f1;
}
.view-btn{
	margin: 9px 0 6px 13px;
	width: 30px;
	height: 30px;
	display: flex;
	justify-content: center;
	padding-top: 1px;
}
.view-on{
	border-bottom: 3px solid #117865;
}
.view-phone{
	margin: 7px 0 0 32px;
}
.arrows{
	display: flex;
	align-items: center;
	gap: 22px;
	margin-left: 26px;
	height: 100%;
}
.arr{
	border: 5px solid transparent;
	border-left: 0;
	border-right: 6px solid #d2d0ce;
	width: 6px;
	height: 10px;
	box-sizing: border-box;
}
.arr-r{
	transform: rotate(180deg);
}
.page-tab{
	margin-left: 8px;
	width: 94px;
	background: #fff;
	border-left: 1px solid #a19f9d;
	border-bottom: 5px solid #117865;
	font-size: 14.500px;
	display: flex;
	align-items: center;
	justify-content: center;
	padding-top: 3px;
}
.page-add{
	margin-left: 1px;
	width: 49px;
	background: #117865;
	display: flex;
	align-items: center;
	justify-content: center;
}

/* visualizations pane */
.viz{
	width: 226px;
	flex: none;
	border-right: 1px solid #e1dfdd;
	position: relative;
}
.p-head{
	height: 50px;
	display: flex;
	align-items: center;
	justify-content: space-between;
	padding: 0 9px 0 10px;
	font-size: 19px;
	font-weight: 500;
}
.build-label{
	padding-left: 10px;
	margin-top: -2px;
	font-size: 14px;
	font-weight: 500;
	line-height: 20px;
}
.build-icons{
	height: 40px;
	margin: 4px 0 0 10px;
	display: flex;
	align-items: center;
}
.build-on{
	width: 40px;
	height: 40px;
	background: #d2d0ce;
	border-radius: 2px;
	display: flex;
	align-items: center;
	justify-content: center;
}
.build-fmt{
	margin-left: 48px;
}
.tab-rule{
	height: 15px;
	border-bottom: 1px solid #a19f9d;
	position: relative;
}
.tab-rule i{
	position: absolute;
	left: 21px;
	bottom: -6px;
	width: 13px;
	height: 13px;
	background: #f3f2f1;
	border: solid #a19f9d;
	border-width: 1px 0 0 1px;
	transform: rotate(45deg);
}
.viz-grid{
	display: grid;
	grid-template-columns: repeat(6, 35px);
	grid-auto-rows: 35px;
	padding: 8px 0 0 8px;
	justify-items: center;
	align-items: center;
}
.viz-grid svg{
	width: 24px;
	height: 24px;
	overflow: visible;
}
.ax{
	fill: none;
	stroke: #484644;
	stroke-width: 1.300;
}
.ln{
	fill: none;
	stroke: #1f76bc;
	stroke-width: 1.300;
}
.wh{
	fill: #fff;
	stroke: #484644;
	stroke-width: 1;
}
.bl{
	fill: #83beec;
	stroke: #1f76bc;
	stroke-width: 1.300;
}
.gr{
	fill: #bdbbb9;
	stroke: #8a8886;
	stroke-width: 1;
}
.num{
	font: 10px "Open Sans", sans-serif;
	fill: #2b88d8;
	text-anchor: middle;
}
.num-sm{
	font-size: 9px;
}
.lang{
	font-family: "Open Sans", sans-serif;
	font-weight: 700;
	fill: #1f76bc;
	text-anchor: middle;
}
.lang-r{
	font-size: 19px;
}
.lang-py{
	font-size: 21px;
}
.viz-more{
	display: flex;
	gap: 6px;
	padding: 15px 0 0 15px;
	height: 26px;
}
.viz-more i{
	width: 2px;
	height: 2px;
	background: #323130;
}
.viz-rule{
	border-top: 2px solid #e1dfdd;
	margin-top: 14px;
}
.well-label{
	margin: 11px 0 0 15px;
	font-size: 14.250px;
	line-height: 20px;
}
.well{
	margin: 6px 6px 0 5px;
	height: 34px;
	background: #fff;
	border: 1px dashed #c8c6c4;
	display: flex;
	align-items: center;
	padding-left: 13px;
	font-size: 14.250px;
}
.well-drill{
	height: 32px;
	margin-top: 7px;
	padding-left: 10px;
}
.drill-label{
	margin: 14px 0 4px 15px;
	font-size: 14.250px;
	font-weight: 500;
	line-height: 20px;
	color: #3b3a39;
}
.tog-row{
	height: 34px;
	padding: 0 27px 0 15px;
	display: flex;
	align-items: center;
	justify-content: space-between;
	font-size: 14.250px;
}
.toggle{
	width: 40px;
	height: 20px;
	border-radius: 10px;
	display: flex;
	align-items: center;
	gap: 2px;
	padding: 0 3px;
	font-size: 10px;
}
.toggle i{
	width: 10px;
	height: 10px;
	border-radius: 50%;
}
.tog-off{
	background: #fff;
	border: 1px solid #8a8886;
	color: #605e5c;
}
.tog-off i{
	background: #605e5c;
}
.tog-on{
	background: #117865;
	color: #fff;
	padding-left: 5px;
}
.tog-on i{
	background: #fff;
}

/* data pane */
.data{
	flex: 1;
}
.d-search{
	height: 32px;
	margin: 7px 1px 0 5px;
	border: 1px solid #a19f9d;
	border-radius: 2px;
	display: flex;
	align-items: center;
	padding-left: 9px;
	gap: 6px;
	font-size: 15.500px;
	color: #605e5c;
}
.tree-row{
	margin: 17px 0 0 19px;
	display: flex;
	align-items: center;
	gap: 9px;
	font-size: 14px;
	color: #484644;
}

/* status bar */
.status{
	height: 28px;
	flex: none;
	background: #f3f2f1;
	border-top: 1px solid #e1dfdd;
	display: flex;
	align-items: center;
	justify-content: space-between;
	font-size: 14.250px;
	color: #605e5c;
}
.st-page{
	margin-left: 5px;
}
.zoom{
	display: flex;
	align-items: center;
}
.z-minus{
	font-weight: 700;
	margin-right: 5px;
}
.z-track{
	width: 125px;
	height: 1px;
	background: #605e5c;
	position: relative;
}
.z-thumb{
	position: absolute;
	left: 40px;
	top: -6px;
	width: 5px;
	height: 13px;
	background: #605e5c;
}
.z-tick{
	position: absolute;
	left: 62px;
	top: -3px;
	width: 1px;
	height: 7px;
	background: #605e5c;
}
.z-plus{
	font-size: 18px;
	line-height: 18px;
	margin-left: 6px;
}
.z-val{
	margin-left: 17px;
	color: #8a8886;
}
.z-fit{
	margin: 0 18px 0 25px;
}
.strip{
	height: 4px;
	flex: none;
	background: #111;
}
.strip-bar{
	margin-left: 60px;
	width: 360px;
	height: 4px;
	background: #2b2b2b;
	border-top: 1px solid #777;
}
```
